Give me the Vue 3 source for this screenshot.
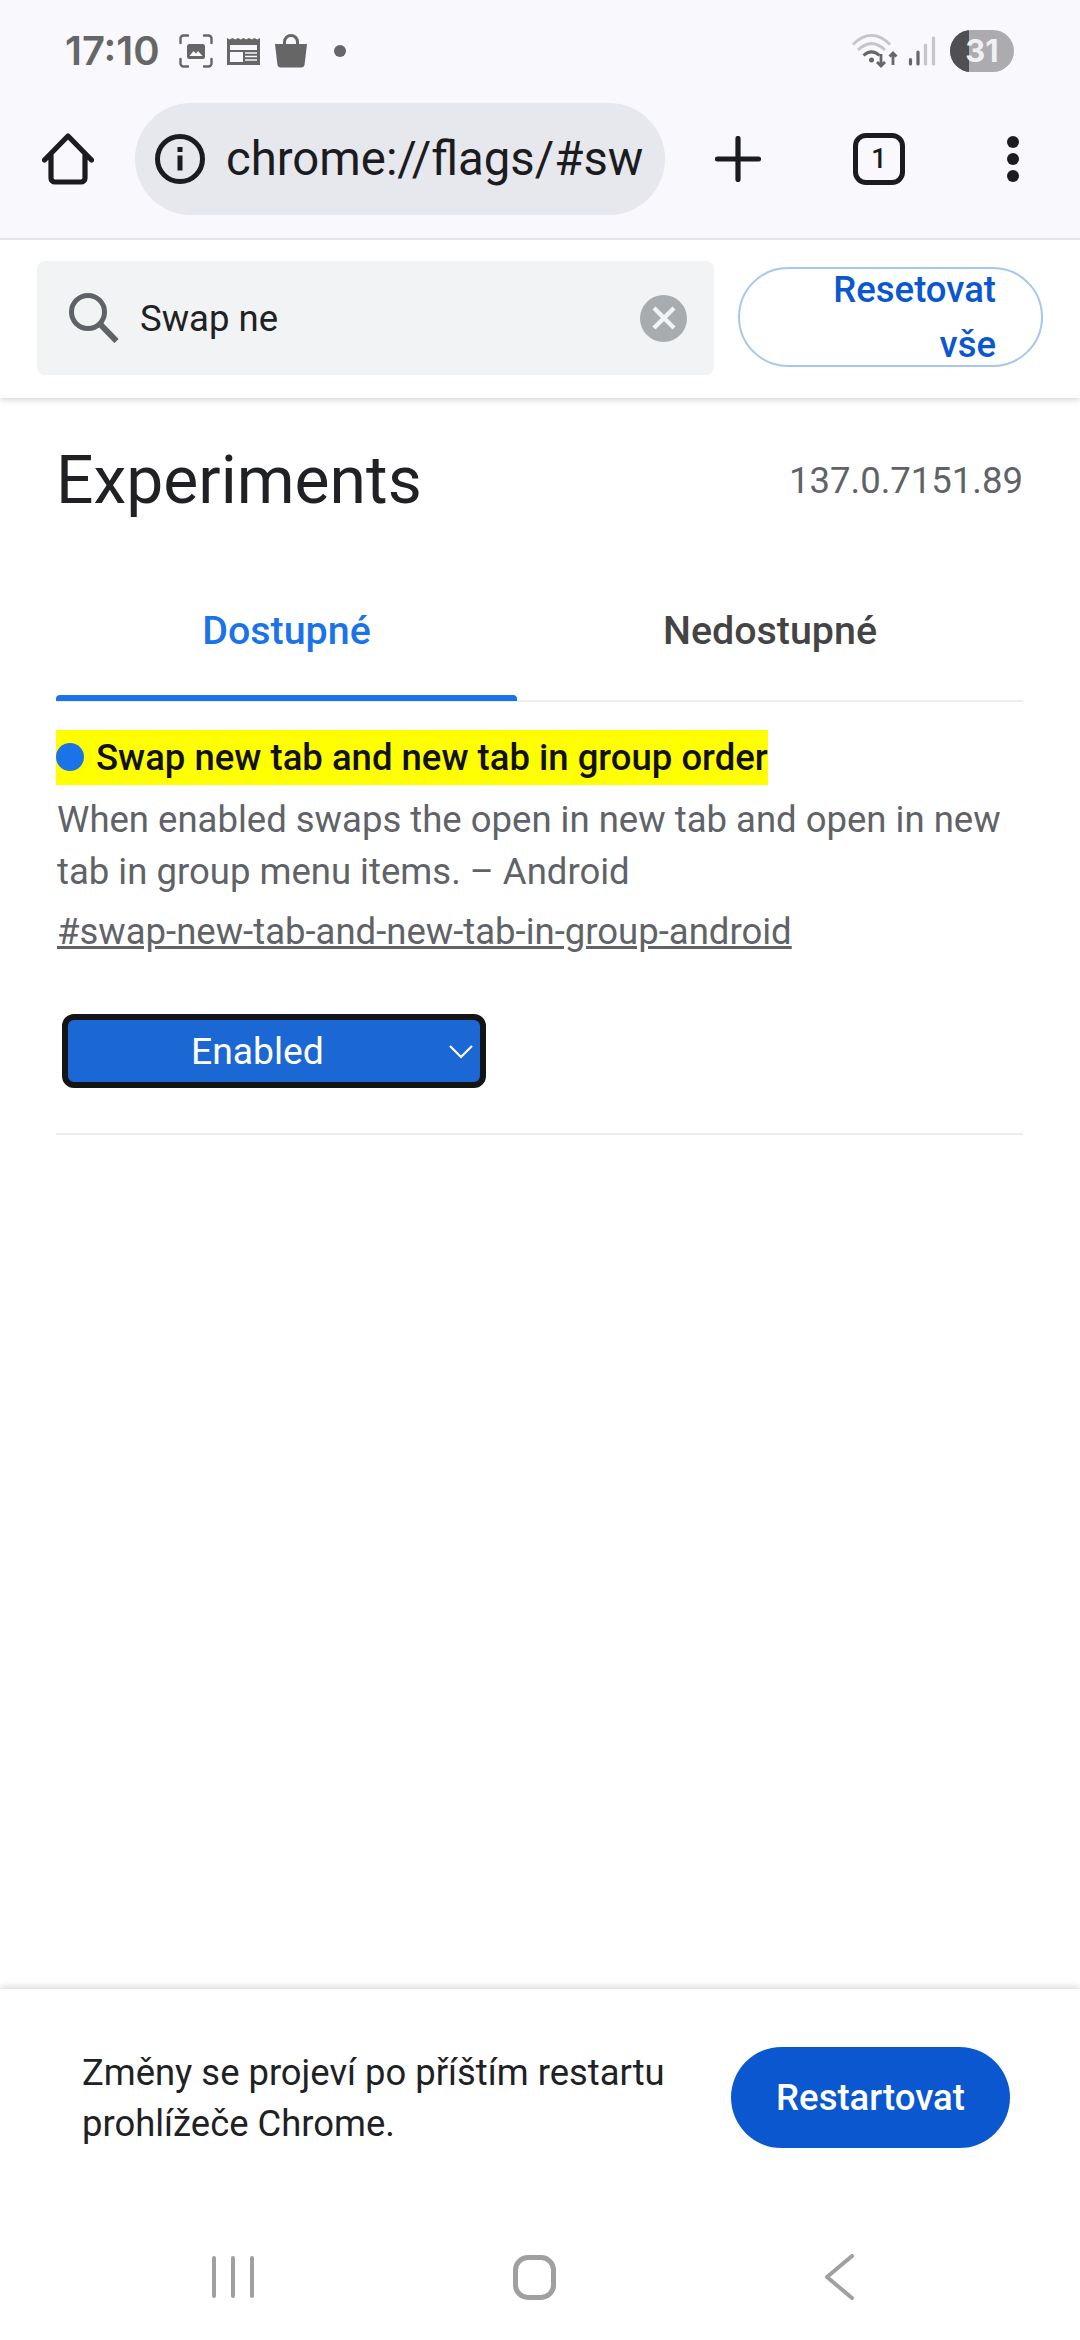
<script setup>
const navBars = [0, 1, 2]
</script>

<template>
  <div class="page">
    <header class="chrome">
      <div class="status">
        <span class="time">17:10</span>
        <svg class="st-shot" width="34" height="34" viewBox="0 0 34 34" fill="none">
          <path d="M1.5 9V4.5a3 3 0 0 1 3-3H9M25 1.500h4.500a3 3 0 0 1 3 3V9M32.500 25v4.500a3 3 0 0 1-3 3H25M9 32.500H4.500a3 3 0 0 1-3-3V25" stroke="#666" stroke-width="2.400" stroke-linecap="round"/>
          <rect x="8" y="10" width="18" height="15" rx="2.500" fill="#666"/>
          <path d="M10.500 22l4-5 2.500 2.500 2-2.500 4.500 5z" fill="#f8f8fd"/>
        </svg>
        <svg class="st-news" width="33" height="29" viewBox="0 0 33 29">
          <path d="M0 2l2.700 1.500L5.500 2l2.700 1.500L11 2l2.700 1.500L16.500 2l2.700 1.500L22 2l2.700 1.500L27.500 2l2.700 1.500L33 2v27H0z" fill="#666"/>
          <rect x="3" y="9" width="27" height="5" fill="#f8f8fd"/>
          <rect x="3" y="16" width="13" height="10" fill="#f8f8fd"/>
          <path d="M18 17h12M18 20.500h12M18 24h12" stroke="#f8f8fd" stroke-width="1.700"/>
        </svg>
        <svg class="st-bag" width="32" height="34" viewBox="0 0 32 34">
          <path d="M9.500 10V8a6.500 6.500 0 0 1 13 0v2" fill="none" stroke="#666" stroke-width="3"/>
          <path d="M0 10h32l-2.400 20.500a3.500 3.500 0 0 1-3.500 3H5.900a3.500 3.500 0 0 1-3.500-3z" fill="#666"/>
        </svg>
        <span class="st-dot"></span>
        <svg class="st-wifi" width="47" height="34" viewBox="0 0 47 34" fill="none">
          <path d="M1 10.500C13 -1.500 26 -1.500 38 10.500" stroke="#c6c6c8" stroke-width="3"/>
          <path d="M6 16C15 7.500 24 7.500 33 16" stroke="#c6c6c8" stroke-width="3"/>
          <path d="M11.500 21.500C17 16.500 22 16.500 27.500 21.500" stroke="#666" stroke-width="3"/>
          <circle cx="19.500" cy="26" r="2.500" fill="#666"/>
          <path d="M29 20v12M25 28l4 4 4-4" stroke="#666" stroke-width="2.800"/>
          <path d="M41 31V19M37.500 22.500l3.500-3.500 3.500 3.500" stroke="#666" stroke-width="2.800"/>
        </svg>
        <svg class="st-signal" width="28" height="30" viewBox="0 0 28 30" fill="none" stroke-linecap="round" stroke-width="3.200">
          <path d="M2.500 28v-4.500" stroke="#666"/>
          <path d="M10 28V16" stroke="#666"/>
          <path d="M17.500 28V9" stroke="#c6c6c8"/>
          <path d="M25.500 28V2" stroke="#c6c6c8"/>
        </svg>
        <div class="battery"><span class="level"></span><b>31</b></div>
      </div>

      <div class="toolbar">
        <svg class="home" width="52" height="52" viewBox="0 0 52 52" fill="none">
          <path d="M2.500 27L26 3l23.500 24M9 21.500V45a4 4 0 0 0 4 4h26a4 4 0 0 0 4-4V21.500" stroke="#1b1c20" stroke-width="5.200" stroke-linecap="round" stroke-linejoin="round"/>
        </svg>
        <div class="omnibox">
          <svg width="50" height="50" viewBox="0 0 50 50" fill="none">
            <circle cx="25" cy="25" r="22.500" stroke="#1b1c20" stroke-width="5"/>
            <rect x="22.500" y="21.500" width="5" height="15" fill="#1b1c20"/>
            <rect x="22.500" y="13" width="5" height="5" fill="#1b1c20"/>
          </svg>
          <span class="url">chrome://flags/#sw</span>
        </div>
        <svg class="plus" width="46" height="46" viewBox="0 0 46 46" fill="none">
          <path d="M23 2.500v41M2.500 23h41" stroke="#1b1c20" stroke-width="5.200" stroke-linecap="round"/>
        </svg>
        <div class="tabs-btn">1</div>
        <div class="menu"><i></i><i></i><i></i></div>
      </div>
    </header>

    <section class="search-bar">
      <div class="search-box">
        <svg width="50" height="50" viewBox="0 0 50 50" fill="none">
          <circle cx="19" cy="19" r="16.500" stroke="#5f6368" stroke-width="5"/>
          <path d="M31 31l16.500 17" stroke="#5f6368" stroke-width="6"/>
        </svg>
        <span class="query">Swap ne</span>
        <div class="clear">
          <svg width="24" height="24" viewBox="0 0 24 24"><path d="M2 2l20 20M22 2L2 22" stroke="#f1f3f4" stroke-width="4.400"/></svg>
        </div>
      </div>
      <button class="reset"><span>Resetovat vše</span></button>
    </section>

    <main class="content">
      <div class="title-row">
        <h1>Experiments</h1>
        <span class="version">137.0.7151.89</span>
      </div>
      <nav class="tabs">
        <div class="tab active">Dostupné</div>
        <div class="tab">Nedostupné</div>
      </nav>
      <article class="flag">
        <h2><mark><i class="dot"></i>Swap new tab and new tab in group order</mark></h2>
        <p>When enabled swaps the open in new tab and open in new tab in group menu items. – Android</p>
        <a class="perma">#swap-new-tab-and-new-tab-in-group-android</a>
        <div class="select">
          <span>Enabled</span>
          <svg width="24" height="14" viewBox="0 0 24 14" fill="none"><path d="M1 1l11 11L23 1" stroke="#fff" stroke-width="2.200"/></svg>
        </div>
      </article>
    </main>

    <footer class="restart">
      <p>Změny se projeví po příštím restartu prohlížeče Chrome.</p>
      <button>Restartovat</button>
    </footer>

    <div class="navbar">
      <div class="nav-recent"><i v-for="b in navBars" :key="b"></i></div>
      <div class="nav-home"></div>
      <svg width="30" height="46" viewBox="0 0 30 46" fill="none"><path d="M28 2L3 23l25 21" stroke="#a0a0a0" stroke-width="4" stroke-linecap="round" stroke-linejoin="round"/></svg>
    </div>
  </div>
</template>

<style>
html, body { margin: 0; background: #fff; }
</style>

<style scoped>
.page {
  width: 1080px;
  height: 2340px;
  display: flex;
  flex-direction: column;
  overflow: hidden;
  font-family: Roboto, "Noto Sans", sans-serif;
  color: #202124;
  background: #fff;
}
.chrome {
  height: 238px;
  flex: none;
  background: #f8f8fd;
  border-bottom: 2px solid #e3e3ea;
  position: relative;
  z-index: 2;
}
.status {
  height: 103px;
  display: flex;
  align-items: center;
  padding: 0 65px 2px;
  box-sizing: border-box;
}
.time {
  font-family: Inter, sans-serif;
  font-size: 40px;
  font-weight: 600;
  color: #666;
  width: 114px;
}
.st-news { margin-left: 14px; }
.st-bag { margin-left: 15px; }
.st-dot {
  width: 12px;
  height: 12px;
  border-radius: 50%;
  background: #666;
  margin-left: 27px;
}
.st-wifi { margin-left: auto; }
.st-signal { margin-left: 9px; }
.battery {
  width: 64px;
  height: 42px;
  margin-left: 14px;
  margin-right: 1px;
  border-radius: 21px;
  background: #acabaf;
  position: relative;
  overflow: hidden;
  display: flex;
  align-items: center;
  justify-content: center;
}
.level {
  position: absolute;
  left: 0;
  top: 0;
  bottom: 0;
  width: 19px;
  background: #505052;
}
.battery b {
  position: relative;
  font-family: Inter, sans-serif;
  font-size: 31px;
  font-weight: 700;
  color: #f0f0f2;
}
.toolbar {
  display: flex;
  align-items: center;
  height: 112px;
  padding-left: 42px;
}
.home { flex: none; }
.omnibox {
  width: 530px;
  height: 112px;
  margin-left: 41px;
  border-radius: 56px;
  background: #e7e7ee;
  display: flex;
  align-items: center;
  padding-left: 20px;
  box-sizing: border-box;
  flex: none;
}
.url {
  margin-left: 21px;
  font-size: 47.300px;
  color: #1b1c20;
  white-space: nowrap;
}
.plus { margin-left: 50px; flex: none; }
.tabs-btn {
  width: 52px;
  height: 52px;
  margin-left: 92px;
  box-sizing: border-box;
  border: 5.500px solid #1b1c20;
  border-radius: 13px;
  display: flex;
  align-items: center;
  justify-content: center;
  font-size: 27px;
  font-weight: 500;
  color: #1b1c20;
  flex: none;
}
.menu {
  margin-left: 102px;
  display: flex;
  flex-direction: column;
  gap: 5px;
}
.menu i {
  width: 12px;
  height: 12px;
  border-radius: 50%;
  background: #1b1c20;
}
.search-bar {
  height: 158px;
  flex: none;
  display: flex;
  align-items: center;
  background: #fff;
  box-shadow: 0 2px 6px rgba(0, 0, 0, 0.16);
  position: relative;
  z-index: 1;
  padding: 0 0 2px 37px;
  box-sizing: border-box;
}
.search-box {
  width: 677px;
  height: 114px;
  background: #f1f3f4;
  border-radius: 8px;
  display: flex;
  align-items: center;
  padding-left: 32px;
  box-sizing: border-box;
}
.query {
  margin-left: 21px;
  font-size: 36.500px;
  color: #202124;
}
.clear {
  width: 47px;
  height: 47px;
  margin-left: auto;
  margin-right: 27px;
  border-radius: 50%;
  background: #a9acae;
  display: flex;
  align-items: center;
  justify-content: center;
}
.reset {
  width: 305px;
  height: 100px;
  margin: -2px 0 0 24px;
  box-sizing: border-box;
  border: 2px solid #a8c7ee;
  border-radius: 50px;
  background: #fff;
  display: flex;
  align-items: center;
  justify-content: flex-end;
  padding: 0 45px 0 0;
  font-family: inherit;
  font-size: 36.500px;
  font-weight: 500;
  line-height: 55px;
  color: #0b57d0;
}
.reset span {
  width: min-content;
  text-align: right;
}
.content {
  flex: 1;
  padding: 0 57px 0 56px;
}
.title-row {
  display: flex;
  justify-content: space-between;
  align-items: flex-start;
  height: 200px;
}
h1 {
  margin: 45px 0 0;
  font-size: 66px;
  font-weight: 400;
  line-height: 76px;
}
.version {
  margin-top: 58px;
  font-size: 36.500px;
  line-height: 50px;
  color: #5f6368;
}
.tabs {
  display: flex;
  height: 102px;
  border-bottom: 2px solid #eee;
}
.tab {
  width: 506px;
  height: 102px;
  box-sizing: border-box;
  font-size: 39.400px;
  font-weight: 500;
  line-height: 50px;
  padding-top: 8px;
  text-align: center;
  color: #444;
}
.tab.active {
  width: 461px;
  color: #1a73e8;
  position: relative;
}
.tab.active::after {
  content: "";
  position: absolute;
  left: 0;
  right: 0;
  bottom: -1px;
  height: 6px;
  background: #1a73e8;
  border-radius: 4px 4px 0 0;
}
.flag {
  padding-top: 28px;
  height: 433px;
  box-sizing: border-box;
  border-bottom: 2px solid #eee;
}
h2 {
  margin: 0;
  font-size: 36.500px;
  font-weight: 500;
  line-height: 55px;
  height: 55px;
}
mark {
  display: inline-block;
  background: #ff0;
  color: #111;
  height: 55px;
}
.dot {
  display: inline-block;
  width: 28px;
  height: 28px;
  border-radius: 50%;
  background: #1a73e8;
  margin-right: 12px;
  vertical-align: -1px;
}
.flag p {
  margin: 9px 0 0 1px;
  font-size: 36.500px;
  line-height: 52px;
  color: #5f6368;
  width: 970px;
}
.perma {
  display: block;
  margin: 8px 0 0 1px;
  font-size: 36.500px;
  line-height: 52px;
  color: #5f6368;
  text-decoration: underline;
}
.select {
  width: 424px;
  height: 74px;
  margin: 56px 0 0 6px;
  box-sizing: border-box;
  border: 6px solid #131416;
  border-radius: 12px;
  background: #1b67d3;
  display: flex;
  align-items: center;
  color: #fff;
  font-size: 37.300px;
  position: relative;
}
.select span { margin-left: 123px; }
.select svg {
  position: absolute;
  right: 7px;
  top: 25px;
}
.restart {
  height: 216px;
  flex: none;
  box-sizing: border-box;
  display: flex;
  align-items: flex-start;
  padding: 58px 70px 0 82px;
  justify-content: space-between;
  box-shadow: 0 -3px 6px rgba(0, 0, 0, 0.13);
  background: #fff;
  position: relative;
}
.restart p {
  margin: 0;
  width: 600px;
  font-size: 36.400px;
  line-height: 51px;
  color: #202124;
}
.restart button {
  width: 279px;
  height: 101px;
  border: none;
  border-radius: 51px;
  background: #0b57d0;
  color: #fff;
  font-family: inherit;
  font-size: 36.500px;
  font-weight: 500;
  padding: 0;
}
.navbar {
  height: 135px;
  flex: none;
  background: #fff;
  position: relative;
  display: flex;
  align-items: center;
  padding: 9px 0 0 212px;
  box-sizing: border-box;
}
.nav-recent {
  display: flex;
  gap: 15px;
}
.nav-recent i {
  width: 4px;
  height: 42px;
  border-radius: 2px;
  background: #a0a0a0;
}
.nav-home {
  width: 43px;
  height: 45px;
  margin-left: 259px;
  box-sizing: border-box;
  border: 5px solid #a0a0a0;
  border-radius: 15px;
}
.navbar svg { margin-left: 268px; }
</style>
